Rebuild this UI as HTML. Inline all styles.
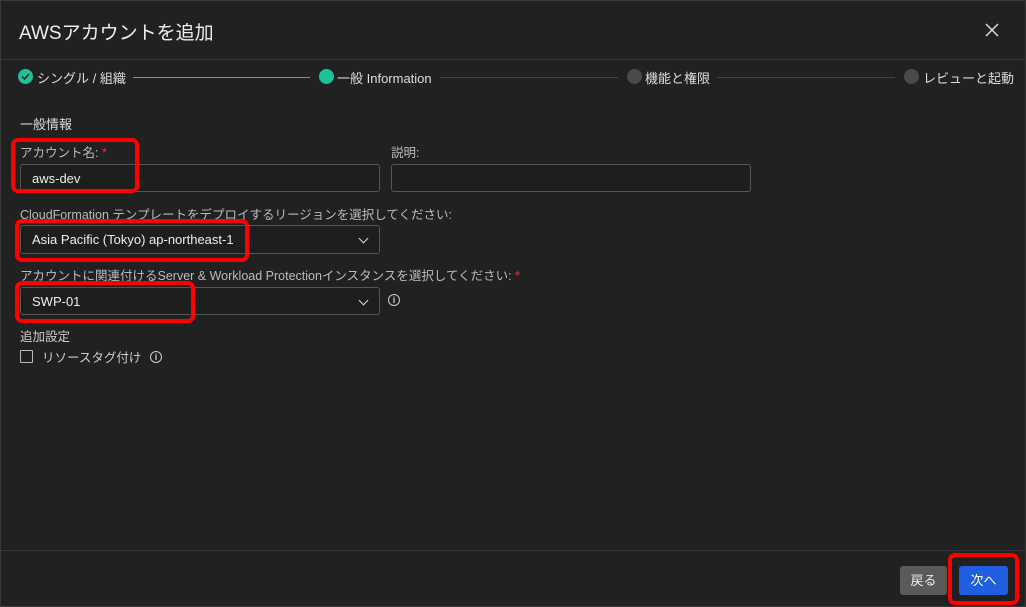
<!DOCTYPE html>
<html><head><meta charset="utf-8"><style>
*{box-sizing:border-box;margin:0;padding:0}
body{width:1026px;height:607px;background:#212121;font-family:"Liberation Sans","Noto Sans CJK JP",sans-serif;color:#ddd;position:relative;overflow:hidden;border:1px solid #3a3a3a}
.a{position:absolute;white-space:nowrap}
.inp{position:absolute;border:1px solid #555;border-radius:3px;background:#1e1e1e;font-size:13px;color:#eee;padding-left:11px;display:flex;align-items:center}
.red{position:absolute;border:4px solid #f00;border-radius:7px}
.lbl{font-size:12.5px;color:#bbb}
.dot{position:absolute;width:15px;height:15px;border-radius:50%}
.chev{position:absolute;right:12px;top:9px;width:7px;height:7px;border-right:1.5px solid #ddd;border-bottom:1.5px solid #ddd;transform:rotate(45deg)}
.info{position:absolute;width:12px;height:12px;border:1.3px solid #ccc;border-radius:50%;font-size:9px;line-height:10px;text-align:center;color:#ccc;font-weight:bold}
</style></head><body>
<div class="a" style="left:18px;top:17px;font-size:19px;color:#eee">AWSアカウントを追加</div>
<svg class="a" style="left:984px;top:22px" width="14" height="14"><path d="M1 1L13 13M13 1L1 13" stroke="#ddd" stroke-width="1.5"/></svg>
<div class="a" style="left:0;top:58px;width:1026px;height:1px;background:#3a3a3a"></div>

<div class="dot" style="left:17px;top:68px;background:#1cc29a"></div>
<svg class="a" style="left:17px;top:68px" width="15" height="15"><path d="M4 7.5L6.5 10L11 5" stroke="#1a1a1a" stroke-width="1.5" fill="none"/></svg>
<div class="a" style="left:36px;top:67px;font-size:13px;color:#ddd">シングル / 組織</div>
<div class="a" style="left:132px;top:76px;width:177px;height:1px;background:#1cc29a"></div>
<div class="dot" style="left:318px;top:68px;background:#1cc29a"></div>
<div class="a" style="left:336px;top:67px;font-size:13px;color:#ddd">一般 Information</div>
<div class="a" style="left:439px;top:76px;width:178px;height:1px;background:#444"></div>
<div class="dot" style="left:626px;top:68px;background:#4a4a4a"></div>
<div class="a" style="left:644px;top:67px;font-size:13px;color:#ddd">機能と権限</div>
<div class="a" style="left:716px;top:76px;width:178px;height:1px;background:#444"></div>
<div class="dot" style="left:903px;top:68px;background:#4a4a4a"></div>
<div class="a" style="left:922px;top:67px;font-size:13px;color:#ddd">レビューと起動</div>

<div class="a" style="left:19px;top:113px;font-size:13px;color:#ddd">一般情報</div>
<div class="a lbl" style="left:19px;top:141px">アカウント名: <span style="color:#e33">*</span></div>
<div class="a lbl" style="left:390px;top:141px">説明:</div>
<div class="inp" style="left:19px;top:163px;width:360px;height:28px">aws-dev</div>
<div class="inp" style="left:390px;top:163px;width:360px;height:28px"></div>

<div class="a lbl" style="left:19px;top:203px">CloudFormation テンプレートをデプロイするリージョンを選択してください:</div>
<div class="inp" style="left:19px;top:224px;width:360px;height:29px">Asia Pacific (Tokyo) ap-northeast-1<span class="chev"></span></div>

<div class="a lbl" style="left:19px;top:264px">アカウントに関連付けるServer &amp; Workload Protectionインスタンスを選択してください: <span style="color:#e33">*</span></div>
<div class="inp" style="left:19px;top:286px;width:360px;height:28px">SWP-01<span class="chev"></span></div>
<div class="info" style="left:387px;top:293px">i</div>

<div class="a lbl" style="left:19px;top:325px;color:#ccc">追加設定</div>
<div class="a" style="left:19px;top:349px;width:13px;height:13px;border:1.3px solid #bbb;border-radius:1px"></div>
<div class="a lbl" style="left:41px;top:346px;color:#ccc">リソースタグ付け</div>
<div class="info" style="left:149px;top:350px">i</div>

<div class="a" style="left:0;top:549px;width:1026px;height:1px;background:#3a3a3a"></div>
<div class="a" style="left:899px;top:565px;width:47px;height:29px;background:#5a5a5a;border-radius:3px;font-size:13px;color:#eee;text-align:center;line-height:29px">戻る</div>
<div class="a" style="left:958px;top:565px;width:49px;height:29px;background:#1f5fe0;border-radius:3px;font-size:13px;color:#fff;text-align:center;line-height:29px">次へ</div>

<div class="red" style="left:10px;top:137px;width:128px;height:55px"></div>
<div class="red" style="left:14px;top:218px;width:234px;height:43px"></div>
<div class="red" style="left:14px;top:280px;width:180px;height:42px"></div>
<div class="red" style="left:947px;top:552px;width:71px;height:52px"></div>
</body></html>
